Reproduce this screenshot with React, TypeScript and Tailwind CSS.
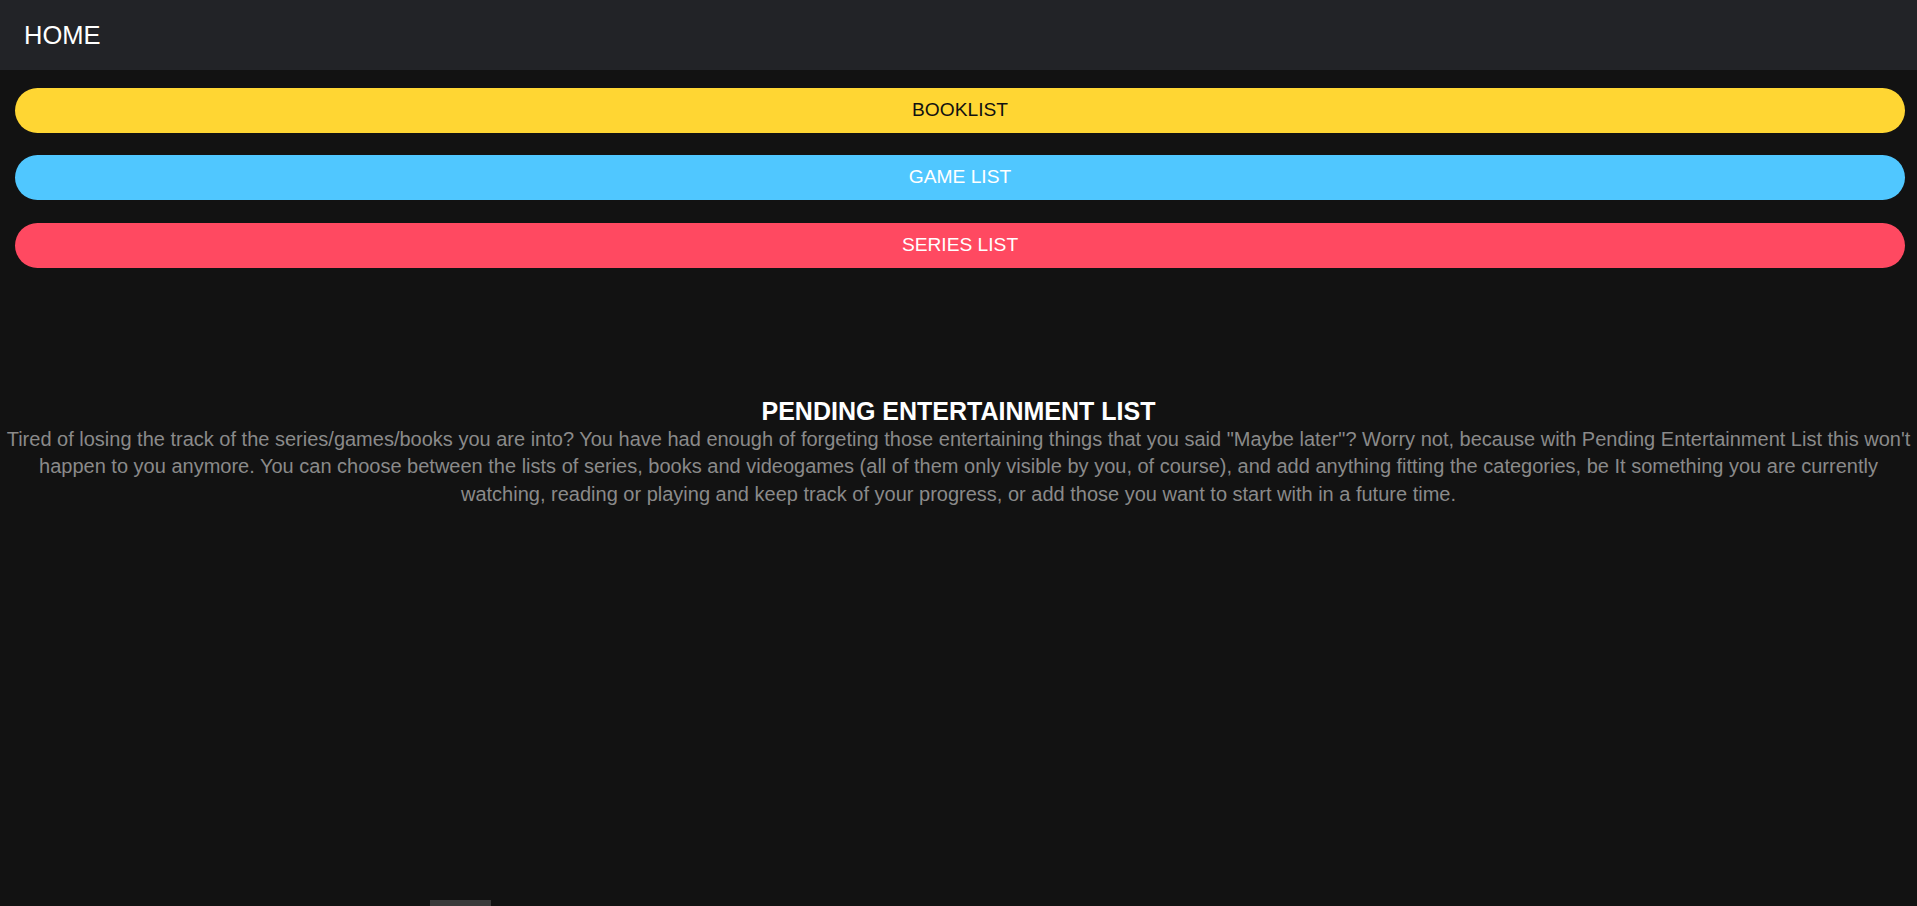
export default function App() {
  const links = [
    { label: "BOOKLIST", className: "bg-[#ffd633] text-[#111111]" },
    { label: "GAME LIST", className: "bg-[#50c7ff] text-white mt-[22px]" },
    { label: "SERIES LIST", className: "bg-[#ff4961] text-white mt-[23px]" },
  ];

  return (
    <div className="min-h-screen bg-[#121212] font-['Liberation_Sans',Arial,sans-serif]">
      <header className="flex h-[70px] items-center bg-[#222327] px-[24px]">
        <span className="text-[25.5px] text-white">HOME</span>
      </header>

      <nav className="ml-[15px] mr-[12px] mt-[18px] flex flex-col">
        {links.map((link) => (
          <button
            key={link.label}
            className={`flex h-[45px] w-full items-center justify-center rounded-full text-[19.2px] ${link.className}`}
          >
            {link.label}
          </button>
        ))}
      </nav>

      <main className="mt-[129px] text-center">
        <h1 className="text-[25px] font-bold leading-[28.7px] text-white">
          PENDING ENTERTAINMENT LIST
        </h1>
        <p className="text-[20px] leading-[27.5px] text-[#8a8a8a]">
          Tired of losing the track of the series/games/books you are into? You
          have had enough of forgeting those entertaining things that you said
          "Maybe later"? Worry not, because with Pending Entertainment List this
          won't happen to you anymore. You can choose between the lists of
          series, books and videogames (all of them only visible by you, of
          course), and add anything fitting the categories, be It something you
          are currently watching, reading or playing and keep track of your
          progress, or add those you want to start with in a future time.
        </p>
      </main>

      <div className="ml-[430px] mt-[392px] h-[20px] w-[61px] bg-[#3a3a3a]" />
    </div>
  );
}
